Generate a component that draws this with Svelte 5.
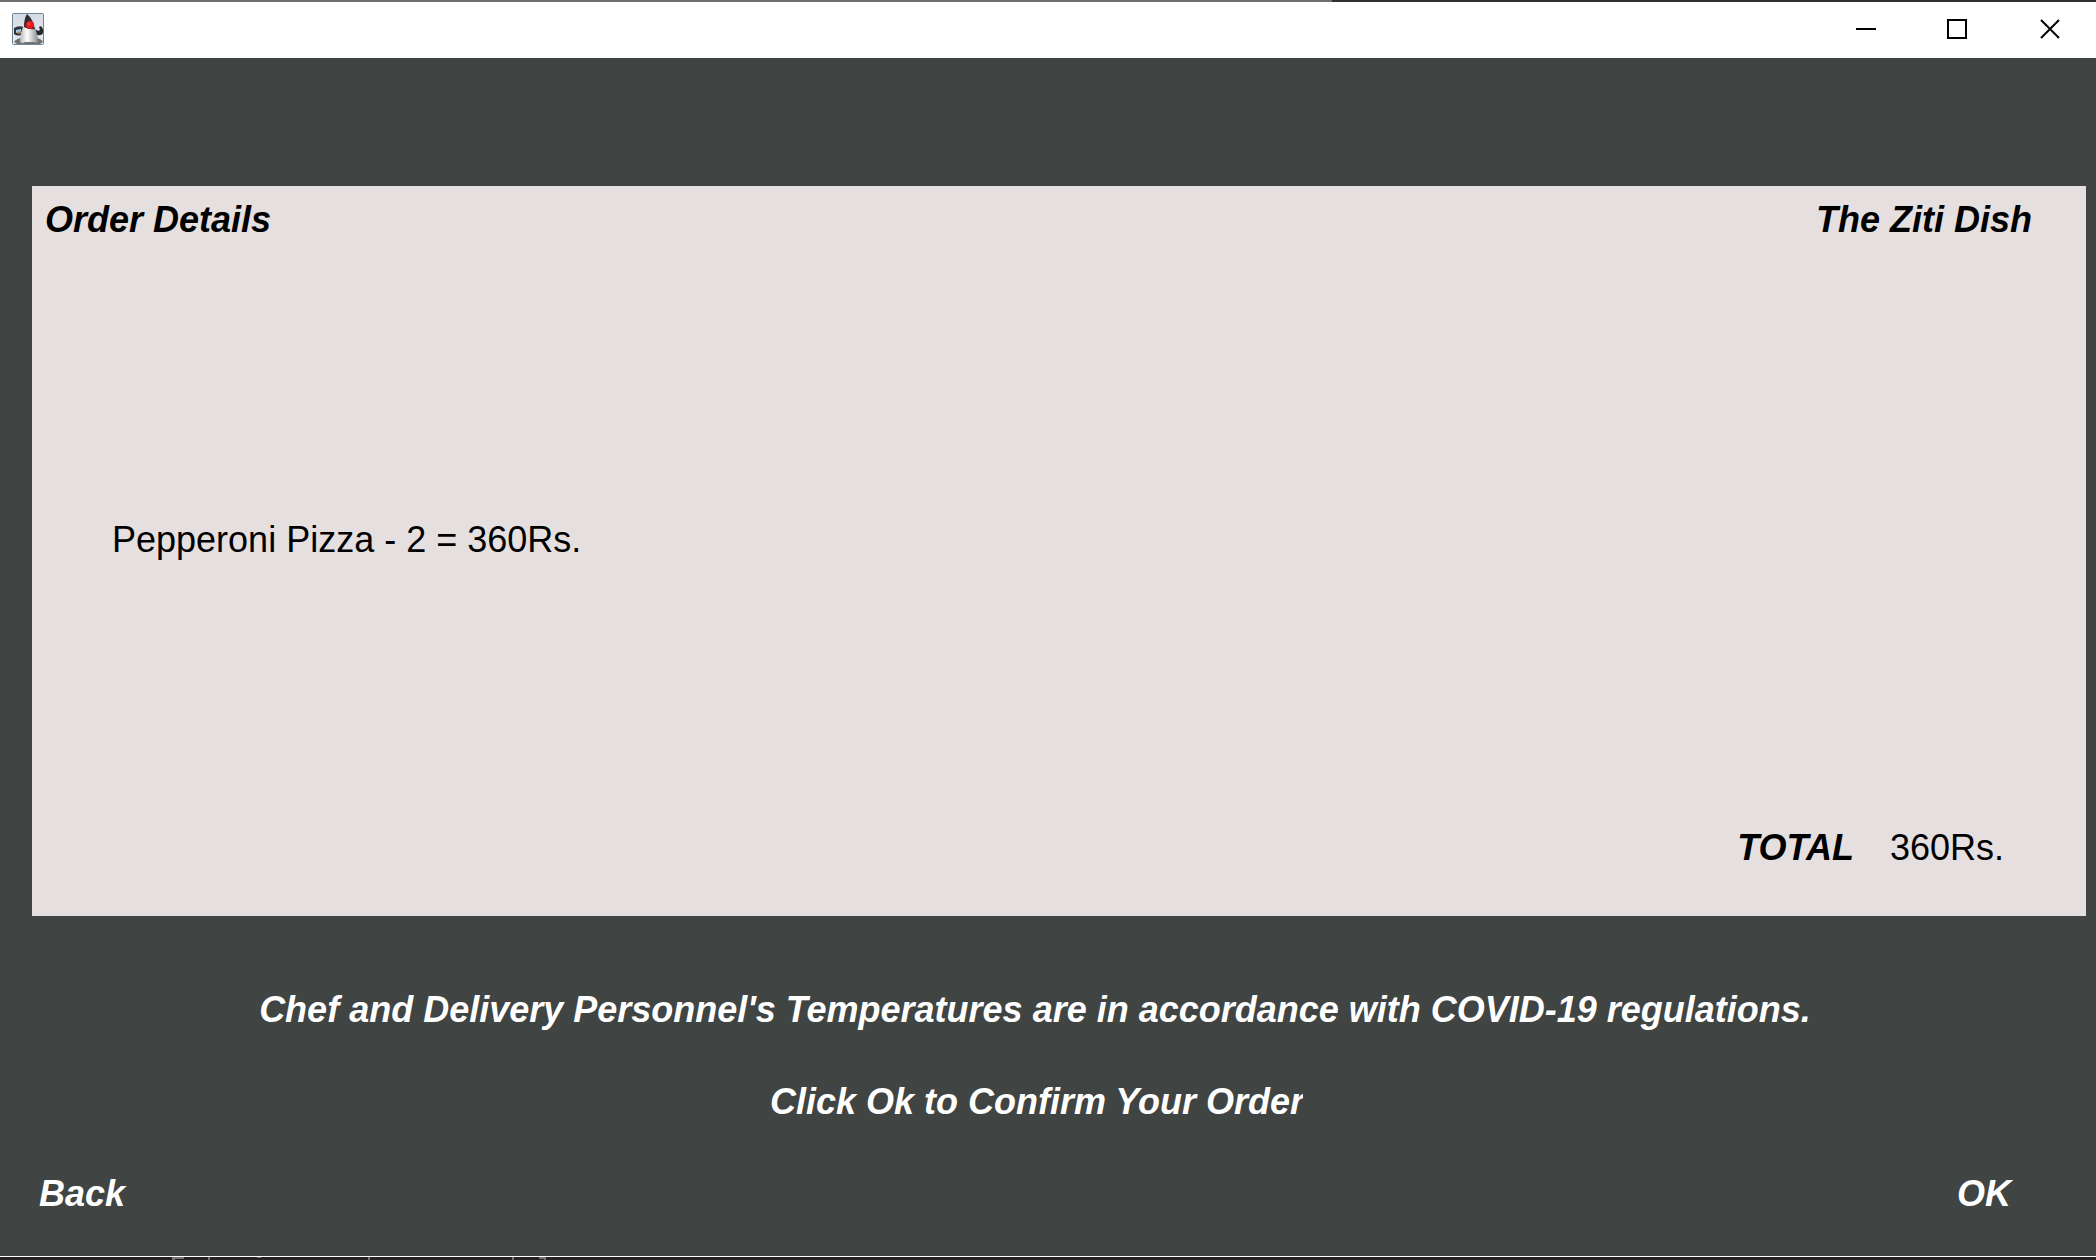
<script>
  let items = $state([{ name: 'Pepperoni Pizza', qty: 2, price: 360 }]);
  let total = $derived(items.reduce((s, i) => s + i.price, 0));
</script>

<div class="window">
  <header class="titlebar">
    <svg class="app" viewBox="0 0 32 32" aria-hidden="true">
      <defs>
        <linearGradient id="tile" x1="0" y1="0" x2="0" y2="1"><stop offset="0" stop-color="#d3dbe4" /><stop offset="1" stop-color="#e8ebf0" /></linearGradient>
        <linearGradient id="belly"><stop offset="0" stop-color="#b8b8b8" /><stop offset="0.4" stop-color="#fff" /><stop offset="1" stop-color="#8c8c8c" /></linearGradient>
      </defs>
      <rect x="0.5" y="0.5" width="31" height="31" rx="1" fill="url(#tile)" stroke="#6d8797" />
      <path d="M2 29Q5 25 10 25H23Q29 25 31 29L28 31H5z" fill="#6d7276" />
      <path d="M12 14Q6 12 2 15V21Q6 24 11 21z" fill="#30353a" />
      <path d="M4 17L9 16V19L4 20z" fill="#9ccdf2" />
      <path d="M5 19L9 18V20L6 21z" fill="#b98a4c" />
      <path d="M23 16Q26 19 28 17L27 14L29 13L31 16Q32 22 28 22Q25 23 23 21z" fill="#26292c" />
      <path d="M13 11Q10 15 9 20Q8 25 8 29Q10 31 13 29H22Q25 31 26 28Q26 22 23 15L20 11z" fill="url(#belly)" />
      <path d="M15 1Q12 5 12 14Q17 17 23 16Q21 6 15 1z" fill="#2d2e30" />
      <circle cx="18" cy="12" r="4" fill="#e8191e" />
      <circle cx="17" cy="11" r="1.500" fill="#f5443f" />
    </svg>
    <div class="controls">
      <button aria-label="Minimize"><svg viewBox="0 0 20 20"><path d="M0 10H20" /></svg></button>
      <button aria-label="Maximize"><svg viewBox="0 0 20 20"><path d="M1 1H19V19H1z" /></svg></button>
      <button aria-label="Close"><svg viewBox="0 0 20 20"><path d="M1 1L19 19M19 1L1 19" /></svg></button>
    </div>
  </header>
  <main>
    <section class="order">
      <div class="heading"><h1>Order Details</h1><h2>The Ziti Dish</h2></div>
      <ul>
        {#each items as item}<li>{item.name} - {item.qty} = {item.price}Rs.</li>{/each}
      </ul>
      <div class="total"><strong>TOTAL</strong><span>{total}Rs.</span></div>
    </section>
    <p class="notice">Chef and Delivery Personnel's Temperatures are in accordance with COVID-19 regulations.</p>
    <p class="confirm"><span>Click Ok to Confirm Your Order</span></p>
    <nav><button>Back</button><button>OK</button></nav>
  </main>
  <svg class="backdrop" viewBox="0 0 2096 3" preserveAspectRatio="xMinYMin slice" aria-hidden="true">
    <path d="M172 0h12v2h-9v1h-3zM208 0h2v3h-2zM257 0h4v1h-4zM368 0h2v3h-2zM512 0h2v3h-2zM539 0h7v3h-2v-1h-5z" fill="#77736f" />
  </svg>
</div>

<style>
  :global(body) { background: #404442; }
  .window { min-height: 100vh; box-sizing: border-box; display: flex; flex-direction: column; font: 36px/44px "Liberation Sans", Arial, sans-serif; color: #000; background: linear-gradient(90deg, #6f6d6d 1332px, #302e2f 1332px); padding-top: 2px; }
  .titlebar { height: 56px; background: #fff; display: flex; justify-content: space-between; align-items: center; padding-left: 12px; }
  .app { width: 32px; height: 32px; margin-bottom: 2px; }
  .controls { display: flex; height: 100%; }
  .controls button { width: 92px; border: 0; background: none; padding: 0 2px 2px 0; display: grid; place-items: center; }
  .controls button:first-child, .controls button:last-child { padding-right: 0; }
  .controls svg { width: 20px; height: 20px; fill: none; stroke: #000; stroke-width: 2; }
  main { flex: 1; display: flex; flex-direction: column; background: #404442; padding: 128px 10px 40px 32px; border-bottom: 1px solid #fff; }
  .order { flex: 1; background: #e5dfdf; display: flex; flex-direction: column; justify-content: space-between; padding: 12px 54px 46px 13px; }
  .heading, nav { display: flex; justify-content: space-between; }
  h1, h2, strong, p, nav button { font-size: 36px; line-height: 44px; font-weight: bold; font-style: italic; margin: 0; }
  ul { list-style: none; margin: 0; padding: 12px 0 0 67px; }
  .total { display: flex; justify-content: flex-end; gap: 36px; padding-right: 28px; }
  p, nav button { color: #fff; }
  p { text-align: center; }
  .notice { padding: 72px 48px 0 0; }
  .confirm { padding: 48px 44px 0 0; }
  .confirm span { display: inline-block; clip-path: inset(0 1px 0 0); }
  nav { padding: 48px 75px 0 7px; }
  nav button { font-family: inherit; background: none; border: 0; padding: 0; }
  .backdrop { display: block; width: 100%; height: 3px; background: #252223; }
</style>
